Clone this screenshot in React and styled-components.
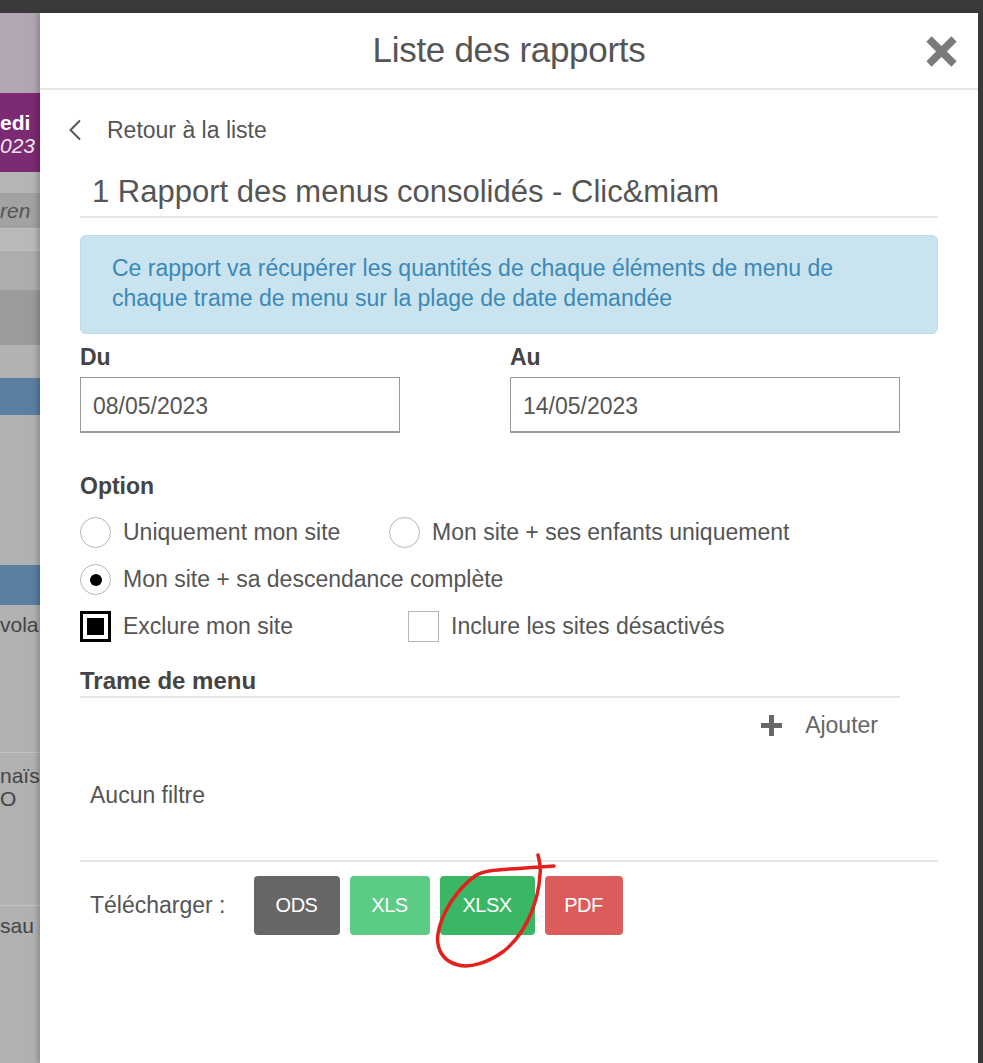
import React from "react";
import styled, { createGlobalStyle } from "styled-components";

// ---------- Global ----------
const GlobalStyle = createGlobalStyle`
  html, body { margin: 0; padding: 0; }
  body {
    font-family: "Liberation Sans", Arial, sans-serif;
    background: #3a3a3a;
  }
  * { box-sizing: border-box; }
`;

// ---------- Page frame ----------
const Screen = styled.div`
  display: flex;
  flex-direction: column;
  height: 1063px;
  overflow: hidden;
`;

const TopBar = styled.div`
  height: 13px;
  background: #3a3a3a;
  flex-shrink: 0;
`;

const Stage = styled.div`
  flex: 1;
  display: flex;
  min-height: 0;
`;

const RightEdge = styled.div`
  width: 5px;
  background: #3a3a3a;
  flex-shrink: 0;
`;

// ---------- Backdrop (page behind the modal) ----------
const Backdrop = styled.div`
  width: 40px;
  flex-shrink: 0;
  display: flex;
  flex-direction: column;
  background: #b1b1b1;
`;

const Band = styled.div`
  height: ${(p) => p.$h}px;
  flex-shrink: 0;
  background: ${(p) => p.$bg || "#b1b1b1"};
  border-top: ${(p) => (p.$line ? "1px solid #c2c2c2" : "none")};
  display: flex;
  flex-direction: column;
  justify-content: ${(p) => p.$justify || "flex-start"};
  overflow: hidden;
  padding-top: ${(p) => p.$pt || 0}px;
`;

const BandText = styled.div`
  font-size: 21px;
  line-height: 23px;
  white-space: nowrap;
  color: ${(p) => p.$color || "#4a4a4a"};
  font-weight: ${(p) => (p.$bold ? 700 : 400)};
  font-style: ${(p) => (p.$italic ? "italic" : "normal")};
`;

// ---------- Modal panel ----------
const Panel = styled.div`
  flex: 1;
  background: #ffffff;
  box-shadow: -2px 0 6px rgba(0, 0, 0, 0.25);
  display: flex;
  flex-direction: column;
  color: #555;
  font-size: 23px;
  position: relative;
  z-index: 1;
`;

const Header = styled.header`
  height: 77px;
  border-bottom: 2px solid #e6e6e6;
  display: flex;
  align-items: center;
  justify-content: center;
  position: relative;
`;

const HeaderTitle = styled.h1`
  margin: 0;
  font-weight: 400;
  font-size: 35px;
  color: #555;
  letter-spacing: -0.3px;
  transform: translateY(-1px);
`;

const CloseButton = styled.button`
  position: absolute;
  right: 19px;
  top: 21px;
  width: 35px;
  height: 35px;
  padding: 0;
  border: 0;
  background: none;
  cursor: pointer;
`;

const Body = styled.div`
  padding: 0 40px;
  display: flex;
  flex-direction: column;
`;

const BackLink = styled.a`
  margin: 25px 0 0 -12px;
  height: 30px;
  display: flex;
  align-items: center;
  gap: 25px;
  color: #555;
  text-decoration: none;
  font-size: 23px;
`;

const ReportTitle = styled.h2`
  margin: 27px 0 0;
  padding: 0 0 4px 12px;
  font-size: 31px;
  line-height: 40px;
  font-weight: 400;
  color: #555;
  border-bottom: 2px solid #e6e6e6;
`;

const InfoBox = styled.div`
  margin-top: 17px;
  background: #c9e3ef;
  border: 1px solid #bcdbe9;
  border-radius: 6px;
  padding: 17px 30px 20px 31px;
  color: #3b89b8;
  font-size: 23px;
  line-height: 30px;
`;

const DateRow = styled.div`
  margin-top: 10px;
  display: flex;
`;

const Field = styled.div`
  width: ${(p) => p.$w}px;
  display: flex;
  flex-direction: column;
`;

const Label = styled.label`
  font-weight: 700;
  font-size: ${(p) => p.$size || 23}px;
  line-height: ${(p) => p.$lh || 26}px;
  margin-bottom: ${(p) => p.$mb || 0}px;
  color: #444;
`;

const DateInput = styled.input`
  margin-top: 7px;
  height: 56px;
  width: ${(p) => p.$w}px;
  border: 1px solid #9a9a9a;
  border-bottom-width: 2px;
  padding: 3px 12px 0;
  font-family: "Liberation Sans", Arial, sans-serif;
  font-size: 23px;
  color: #555;
  outline: none;
`;

const OptionBlock = styled.div`
  margin-top: 38px;
  display: flex;
  flex-direction: column;
`;

const OptionRow = styled.div`
  height: 47px;
  display: flex;
  align-items: center;
`;

const Choice = styled.label`
  display: flex;
  align-items: center;
  gap: 12px;
  width: ${(p) => (p.$w ? `${p.$w}px` : "auto")};
  color: #555;
  font-size: 23px;
  cursor: pointer;
`;

const Radio = styled.span`
  width: 31px;
  height: 31px;
  border-radius: 50%;
  border: 1.5px solid #b5b5b5;
  display: flex;
  align-items: center;
  justify-content: center;
  flex-shrink: 0;

  &::after {
    content: "";
    width: 12px;
    height: 12px;
    border-radius: 50%;
    background: #000;
    display: ${(p) => (p.$checked ? "block" : "none")};
  }
`;

const Checkbox = styled.span`
  width: 31px;
  height: 31px;
  border: ${(p) => (p.$checked ? "3px solid #000" : "1.5px solid #b5b5b5")};
  display: flex;
  align-items: center;
  justify-content: center;
  flex-shrink: 0;

  &::after {
    content: "";
    width: 17px;
    height: 17px;
    background: #000;
    display: ${(p) => (p.$checked ? "block" : "none")};
  }
`;

const SectionTitle = styled.div`
  margin-top: 16px;
  width: 820px;
  border-bottom: 2px solid #e6e6e6;
  font-weight: 700;
  font-size: 24px;
  line-height: 30px;
  color: #444;
`;

const AddRow = styled.div`
  width: 820px;
  margin-top: 12px;
  height: 30px;
  display: flex;
  justify-content: flex-end;
  padding-right: 22px;
`;

const AddButton = styled.button`
  display: flex;
  align-items: center;
  gap: 22px;
  border: 0;
  background: none;
  padding: 0;
  font-family: "Liberation Sans", Arial, sans-serif;
  font-size: 23px;
  color: #666;
  cursor: pointer;
`;

const EmptyText = styled.div`
  margin-top: 40px;
  padding-left: 10px;
  line-height: 30px;
  color: #555;
`;

const Divider = styled.hr`
  margin: 50px 0 0;
  border: 0;
  border-top: 2px solid #e6e6e6;
`;

const DownloadRow = styled.div`
  margin-top: 14px;
  padding-left: 10px;
  display: flex;
  align-items: center;
  position: relative;
`;

const DownloadLabel = styled.span`
  margin-right: 28px;
  color: #555;
`;

const Buttons = styled.div`
  display: flex;
  gap: 10px;
`;

const ExportButton = styled.button`
  height: 59px;
  width: ${(p) => p.$w}px;
  padding: 0;
  border: 0;
  border-radius: 4px;
  background: ${(p) => p.$bg};
  color: #fff;
  font-family: "Liberation Sans", Arial, sans-serif;
  font-size: 20px;
  letter-spacing: -0.5px;
  cursor: pointer;
`;

const Scribble = styled.svg`
  position: absolute;
  left: 350px;
  top: -26px;
  pointer-events: none;
  overflow: visible;
`;

// ---------- Icons ----------
const CloseIcon = () => (
  <svg width="35" height="35" viewBox="0 0 35 35">
    <path d="M5 5 L30 30 M30 5 L5 30" stroke="#7a7a7a" strokeWidth="7.5" strokeLinecap="butt" />
  </svg>
);

const ChevronLeft = () => (
  <svg width="14" height="22" viewBox="0 0 14 22">
    <path d="M12 1.5 L2.5 11 L12 20.5" fill="none" stroke="#555" strokeWidth="2" />
  </svg>
);

const PlusIcon = () => (
  <svg width="23" height="23" viewBox="0 0 23 23">
    <path d="M11.5 1 V22 M1 11.5 H22" stroke="#666" strokeWidth="5" />
  </svg>
);

// ---------- Data ----------
const exportFormats = [
  { label: "ODS", bg: "#666666", w: 86 },
  { label: "XLS", bg: "#5ccb84", w: 80 },
  { label: "XLSX", bg: "#39b765", w: 95 },
  { label: "PDF", bg: "#dc5c5c", w: 78 },
];

// ---------- Main Component ----------
const App = () => {
  return (
    <>
      <GlobalStyle />
      <Screen>
        <TopBar />
        <Stage>
          <Backdrop>
            <Band $h={80} $bg="#b3a6b3" />
            <Band $h={79} $bg="#7b2a73" $pt={18}>
              <BandText $bold $color="#fff">edi</BandText>
              <BandText $italic $color="#f1e6ef">023</BandText>
            </Band>
            <Band $h={21} $bg="#b5b5b5" />
            <Band $h={35} $bg="#a2a2a2" $justify="center">
              <BandText $italic $color="#555">ren</BandText>
            </Band>
            <Band $h={22} $bg="#b9b9b9" $line />
            <Band $h={40} $bg="#adadad" $line />
            <Band $h={55} $bg="#9b9b9b" />
            <Band $h={33} $bg="#b2b2b2" />
            <Band $h={37} $bg="#5b7fa3" />
            <Band $h={150} $bg="#b1b1b1" />
            <Band $h={40} $bg="#5b7fa3" />
            <Band $h={147} $bg="#b1b1b1" $pt={8}>
              <BandText $color="#444">vola</BandText>
            </Band>
            <Band $h={153} $bg="#b1b1b1" $line $pt={11}>
              <BandText $color="#444">naïs</BandText>
              <BandText $color="#444">O</BandText>
            </Band>
            <Band $h={158} $bg="#b1b1b1" $line $pt={8}>
              <BandText $color="#444">sau</BandText>
            </Band>
          </Backdrop>

          <Panel>
            <Header>
              <HeaderTitle>Liste des rapports</HeaderTitle>
              <CloseButton aria-label="Fermer">
                <CloseIcon />
              </CloseButton>
            </Header>

            <Body>
              <BackLink href="#">
                <ChevronLeft />
                Retour à la liste
              </BackLink>

              <ReportTitle>1 Rapport des menus consolidés - Clic&amp;miam</ReportTitle>

              <InfoBox>
                Ce rapport va récupérer les quantités de chaque éléments de menu de
                chaque trame de menu sur la plage de date demandée
              </InfoBox>

              <DateRow>
                <Field $w={430}>
                  <Label>Du</Label>
                  <DateInput $w={320} defaultValue="08/05/2023" />
                </Field>
                <Field $w={390}>
                  <Label>Au</Label>
                  <DateInput $w={390} defaultValue="14/05/2023" />
                </Field>
              </DateRow>

              <OptionBlock>
                <Label $lh={30} $mb={8}>Option</Label>
                <OptionRow>
                  <Choice $w={309}>
                    <Radio />
                    Uniquement mon site
                  </Choice>
                  <Choice>
                    <Radio />
                    Mon site + ses enfants uniquement
                  </Choice>
                </OptionRow>
                <OptionRow>
                  <Choice>
                    <Radio $checked />
                    Mon site + sa descendance complète
                  </Choice>
                </OptionRow>
                <OptionRow>
                  <Choice $w={328}>
                    <Checkbox $checked />
                    Exclure mon site
                  </Choice>
                  <Choice>
                    <Checkbox />
                    Inclure les sites désactivés
                  </Choice>
                </OptionRow>
              </OptionBlock>

              <SectionTitle>Trame de menu</SectionTitle>
              <AddRow>
                <AddButton>
                  <PlusIcon />
                  Ajouter
                </AddButton>
              </AddRow>
              <EmptyText>Aucun filtre</EmptyText>

              <Divider />

              <DownloadRow>
                <DownloadLabel>Télécharger :</DownloadLabel>
                <Buttons>
                  {exportFormats.map((f) => (
                    <ExportButton key={f.label} $bg={f.bg} $w={f.w}>
                      {f.label}
                    </ExportButton>
                  ))}
                </Buttons>
                <Scribble width="130" height="120" viewBox="0 0 130 120">
                  <path
                    d="M108 5 C110 13 111 18 110 24 C109 45 100 80 74 101 C58 113 40 118 28 115 C12 111 6 98 8 84 C11 64 26 40 45 26 C55 19 70 20 124 16"
                    fill="none"
                    stroke="#e3211c"
                    strokeWidth="3.5"
                    strokeLinecap="round"
                  />
                </Scribble>
              </DownloadRow>
            </Body>
          </Panel>
          <RightEdge />
        </Stage>
      </Screen>
    </>
  );
};

export default App;
